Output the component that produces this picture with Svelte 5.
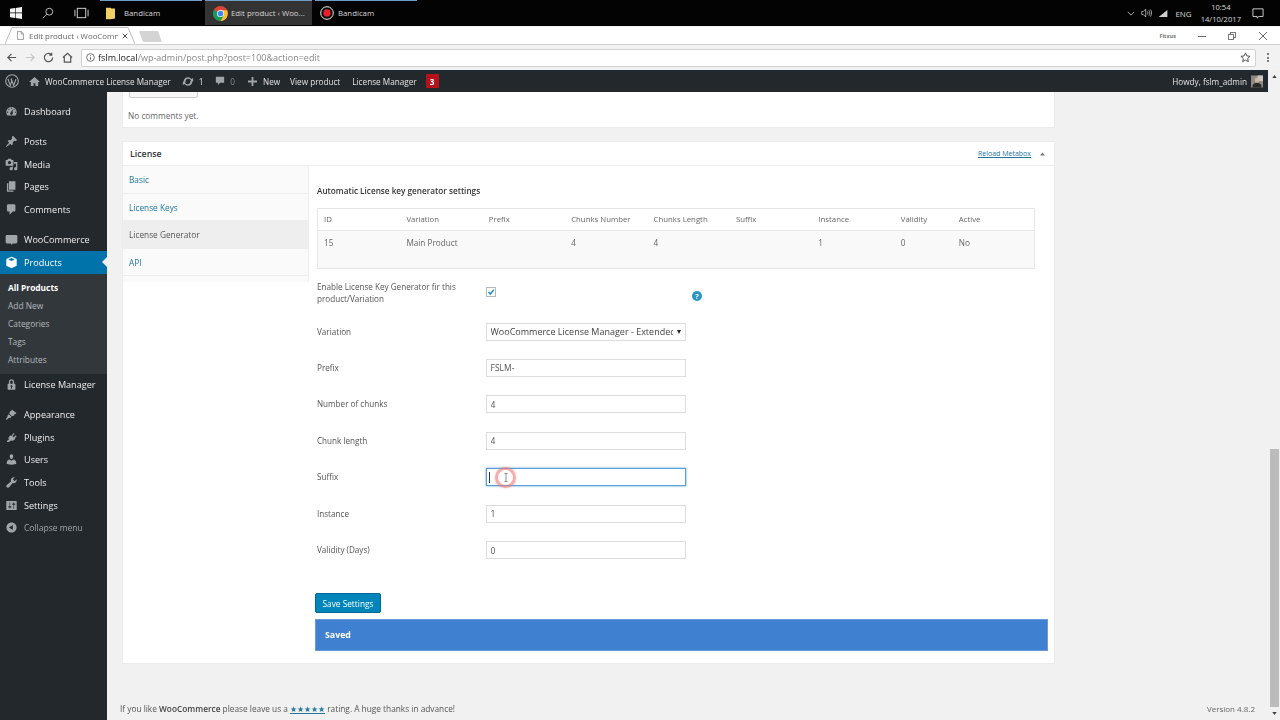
<script>
  const ic = {
    dash: "M3.76 16h12.48c1.1-1.37 1.76-3.11 1.76-5 0-4.42-3.58-8-8-8s-8 3.58-8 8c0 1.89.66 3.63 1.76 5zM10 4c.55 0 1 .45 1 1s-.45 1-1 1-1-.45-1-1 .45-1 1-1zM6 6c.55 0 1 .45 1 1s-.45 1-1 1-1-.45-1-1 .45-1 1-1zm8 0c.55 0 1 .45 1 1s-.45 1-1 1-1-.45-1-1 .45-1 1-1zm-5.37 5.55L12 7v6c0 1.1-.9 2-2 2s-2-.9-2-2c0-.57.24-1.08.63-1.45zM4 10c.55 0 1 .45 1 1s-.45 1-1 1-1-.45-1-1 .45-1 1-1zm12 0c.55 0 1 .45 1 1s-.45 1-1 1-1-.45-1-1 .45-1 1-1z",
    pin: "M10.44 3.02l1.82-1.82 6.36 6.35-1.83 1.82c-1.05-.68-2.48-.57-3.41.36l-.75.75c-.92.93-1.04 2.35-.35 3.41l-1.83 1.82-2.41-2.41-2.8 2.79c-.42.42-3.38 2.71-3.8 2.29s1.86-3.39 2.28-3.81l2.79-2.79L4.1 9.36l1.83-1.82c1.05.69 2.48.57 3.4-.36l.75-.75c.93-.92 1.05-2.35.36-3.41z",
    media: "M13 11V4c0-.55-.45-1-1-1h-1.67L9 1H5L3.67 3H2c-.55 0-1 .45-1 1v7c0 .55.45 1 1 1h10c.55 0 1-.45 1-1zM7 4.500c1.380 0 2.500 1.120 2.500 2.500S8.380 9.500 7 9.500 4.500 8.380 4.500 7 5.620 4.500 7 4.500zM14 6h5v10.500c0 1.380-1.120 2.500-2.500 2.500S14 17.880 14 16.500s1.120-2.500 2.500-2.500c.17 0 .34.02.5.05V9h-3V6zm-4 8.050V13h2v3.500c0 1.380-1.120 2.500-2.500 2.500S7 17.880 7 16.500 8.120 14 9.500 14c.17 0 .34.02.5.05z",
    pages: "M6 15V2h10v13H6zm-1 1h8v2H3V5h2v11z",
    comment: "M5 2h9c1.100 0 2 .9 2 2v7c0 1.100-.9 2-2 2h-2l-5 5v-5H5c-1.100 0-2-.9-2-2V4c0-1.100.9-2 2-2z",
    woo: "M3 3h14c1.100 0 2 .9 2 2v9c0 1.100-.9 2-2 2h-5l-1.500 2.500L9 16H3c-1.100 0-2-.9-2-2V5c0-1.100.9-2 2-2z",
    box: "M10 1l8 3.500v10.500l-8 4-8-4V4.500zM10 3.200L5 5.300l5 2.200 5-2.200z",
    lock: "M14 9h1c.55 0 1 .45 1 1v7c0 .55-.45 1-1 1H5c-.55 0-1-.45-1-1v-7c0-.55.45-1 1-1h1V6c0-2.210 1.790-4 4-4s4 1.790 4 4v3zm-2 0V6c0-1.100-.9-2-2-2s-2 .9-2 2v3h4zm-1 7l-.36-2.150c.51-.24.86-.75.86-1.350 0-.83-.67-1.500-1.500-1.500s-1.500.67-1.500 1.500c0 .6.35 1.110.86 1.350L9 16h2z",
    brush: "M11 2.500l6.500 5-1.500 2-1-.5-1 2.500-3.500 1-4-4 1.500-3.500 2.500-1-.3-1zM5.500 9.500l4.500 4-1.500 1.500c-1.500.5-2.500 0-3.500 1-.8.8-2 2-3 2s.2-2.500 1-3.300c1-1 1-2 1-3.200z",
    plug: "M13 3l1.500 1.500-3 3 2 2 3-3L18 8l-3 3 1 1-1.500 1.500c-2 2-4 2-5.500 1L6 17H3v-1.500l3-2.500c-1-1.500-.5-3.500 1-5L8.500 6.500l1.500 1z",
    user: "M10 9.250c-2.270 0-2.730-3.440-2.730-3.440C7 4.020 7.820 2 9.960 2c2.150 0 2.970 2.020 2.700 3.810 0 0-.39 3.440-2.660 3.440zm0 2.570L12.720 10c2.390 0 4.520 2.330 4.520 4.530v2.490s-3.650 1.130-7.240 1.130c-3.650 0-7.240-1.130-7.240-1.130v-2.490c0-2.250 1.940-4.480 4.150-4.480z",
    tools: "M16.680 9.770c-1.340 1.340-3.300 1.670-4.950.99l-5.410 6.520c-.99.99-2.590.99-3.580 0s-.99-2.590 0-3.570l6.520-5.420c-.68-1.650-.35-3.610.99-4.950 1.280-1.280 3.120-1.620 4.720-1.060l-2.890 2.890 2.820 2.820 2.860-2.870c.53 1.580.18 3.400-1.080 4.670z",
    settings: "M18 16V4c0-.55-.45-1-1-1H3c-.55 0-1 .45-1 1v12c0 .55.45 1 1 1h14c.55 0 1-.45 1-1zM8 11h1c.55 0 1 .45 1 1s-.45 1-1 1H8v1.500c0 .28-.22.5-.5.5s-.5-.22-.5-.5V13H6c-.55 0-1-.45-1-1s.45-1 1-1h1V5.500c0-.28.22-.5.5-.5s.5.22.5.5V11zm5-2h-1c-.55 0-1-.45-1-1s.45-1 1-1h1V5.500c0-.28.22-.5.5-.5s.5.22.5.5V7h1c.55 0 1 .45 1 1s-.45 1-1 1h-1v5.500c0 .28-.22.5-.5.5s-.5-.22-.5-.5V9z",
    collapse: "M10 2.160c4.330 0 7.840 3.510 7.840 7.840s-3.510 7.840-7.840 7.840S2.160 14.330 2.160 10 5.670 2.160 10 2.160zM12 14V6l-6 4z"
  };
  const groupA = [["Posts", ic.pin], ["Media", ic.media], ["Pages", ic.pages], ["Comments", ic.comment]];
  const sub = ["All Products", "Add New", "Categories", "Tags", "Attributes"];
  const groupB = [["Appearance", ic.brush], ["Plugins", ic.plug], ["Users", ic.user], ["Tools", ic.tools], ["Settings", ic.settings]];
  const cols = ["ID", "Variation", "Prefix", "Chunks Number", "Chunks Length", "Suffix", "Instance", "Validity", "Active"];
  const vals = ["15", "Main Product", "", "4", "4", "", "1", "0", "No"];
  const tabs = ["Basic", "License Keys", "License Generator", "API"];
  const fields = [["Prefix", "FSLM-"], ["Number of chunks", "4"], ["Chunk length", "4"], ["Suffix", ""], ["Instance", "1"], ["Validity (Days)", "0"]];
</script>

<div class="screen">
  <header class="taskbar">
    <div class="tb-left">
      <svg class="win" viewBox="0 0 12 12"><path d="M0 1.700 5 1v4.600H0zM5.600.9 12 0v5.600H5.600zM0 6.200h5v4.700l-5-.7zM5.600 6.200H12V12l-6.400-.9z" /></svg>
      <svg class="tb-ic search" viewBox="0 0 14 14"><circle cx="8.500" cy="5.500" r="4" /><path d="M5.500 8.500 1 13" /></svg>
      <svg class="tb-ic view" viewBox="0 0 16 12"><rect x="3.500" y="1" width="9" height="10" /><path d="M1 2.500v7M15 2.500v7" /></svg>
    </div>
    <div class="task t1">
      <svg class="folder" viewBox="0 0 10 13"><path d="M0 0h5l1 1h4v11l-5 1H0z" /></svg>
      <span>Bandicam</span>
    </div>
    <div class="task t2">
      <svg class="chrome" viewBox="0 0 16 16">
        <circle cx="8" cy="8" r="8" fill="#db4437" />
        <path d="M8 8 1.100 4A8 8 0 0 0 8 16l3.500-6z" fill="#0f9d58" />
        <path d="M8 4.500h7A8 8 0 0 1 8 16l3.500-6z" fill="#fbc02d" />
        <circle cx="8" cy="8" r="3.800" fill="#fff" /><circle cx="8" cy="8" r="3" fill="#4285f4" />
      </svg>
      <span>Edit product ‹ Woo...</span>
    </div>
    <div class="task t3">
      <svg class="rec" viewBox="0 0 14 14"><circle cx="7" cy="7" r="6.300" /><circle cx="7" cy="7" r="3.700" class="dot" /></svg>
      <span>Bandicam</span>
    </div>
    <div class="tray">
      <svg class="tr-ic" viewBox="0 0 10 6"><path d="M1 1l4 4 4-4" /></svg>
      <svg class="tr-vol" viewBox="0 0 14 12"><path d="M1 4h2l3-3v10L3 8H1zM8 4c1 1 1 3 0 4M10 2.500c1.700 2 1.700 5 0 7M12 1.500c2 2.600 2 6.400 0 9" /></svg>
      <svg class="tr-net" viewBox="0 0 10 8"><path d="M0 8 10 0v8z" /></svg>
      <span class="lang">ENG</span>
      <div class="clock"><span>10:54</span><span>14/10/2017</span></div>
      <svg class="tr-note" viewBox="0 0 14 13"><path d="M1 1h12v9H8l-2 2v-2H1z" /></svg>
    </div>
  </header>

  <div class="tabstrip">
    <div class="tab">
      <svg class="tab-shape" viewBox="0 0 130 17" preserveAspectRatio="none"><path d="M0 17 L7 .5 H123 L130 17" /></svg>
      <svg class="doc" viewBox="0 0 9 11"><path d="M.5.500h5l3 3v7h-8zM5.500.500v3h3" /></svg>
      <span class="tab-title">Edit product ‹ WooComn</span>
      <svg class="tab-x" viewBox="0 0 8 8"><path d="M1 1l6 6M7 1 1 7" /></svg>
    </div>
    <div class="newtab"></div>
    <div class="win-ctl">
      <span class="profile">Fitxus</span>
      <svg class="wc min" viewBox="0 0 10 10"><path d="M0 5h10" /></svg>
      <svg class="wc res" viewBox="0 0 10 10"><path d="M.5 3h6.500v6.500H.5zM3 3V.5h6.500v6.500H7" /></svg>
      <svg class="wc cls" viewBox="0 0 10 10"><path d="M0 0l10 10M10 0 0 10" /></svg>
    </div>
  </div>

  <div class="toolbar">
    <svg class="nav" viewBox="0 0 12 12"><path d="M11 6H2M6 2 2 6l4 4" /></svg>
    <svg class="nav off" viewBox="0 0 12 12"><path d="M1 6h9M6 2l4 4-4 4" /></svg>
    <svg class="nav" viewBox="0 0 12 12"><path d="M10.500 6A4.500 4.500 0 1 1 9 2.700M9.500 .8v2.700H6.800" /></svg>
    <svg class="nav" viewBox="0 0 12 12"><path d="M1 6l5-4.500L11 6M2.500 5v6h7V5" /></svg>
    <div class="omni">
      <svg class="info" viewBox="0 0 10 10"><circle cx="5" cy="5" r="4.300" /><path d="M5 4.500V7.500M5 2.500v1" /></svg>
      <span class="host">fslm.local</span><span class="path">/wp-admin/post.php?post=100&amp;action=edit</span>
      <svg class="star" viewBox="0 0 12 12"><path d="M6 1l1.500 3.300 3.500.4-2.600 2.400.7 3.500L6 8.800l-3.100 1.800.7-3.500L1 4.700l3.500-.4z" /></svg>
    </div>
    <div class="dots"><i></i><i></i><i></i></div>
  </div>

  <div class="page">
    <div class="main">
      <div class="adminbar">
        <svg class="wp" viewBox="0 0 16 16"><circle cx="8" cy="8" r="7.200" /><path d="M3.300 5.500 6 13l1.800-5-1-2.500M7 5.500 10 13l2.500-7" /></svg>
        <svg class="ab-ic home" viewBox="0 0 12 12"><path d="M6 1 0 6.500h2V11h3V8h2v3h3V6.500h2z" /></svg>
        <span class="ab-site">WooCommerce License Manager</span>
        <svg class="ab-ic upd" viewBox="0 0 14 12"><path d="M2 6a5 5 0 0 1 9-3l2-1v4H9l1.500-1.200A3.400 3.400 0 0 0 4 6zM12 6a5 5 0 0 1-9 3l-2 1V6h4L3.500 7.200A3.400 3.400 0 0 0 10 6z" /></svg>
        <span class="ab-num">1</span>
        <svg class="ab-ic cmt" viewBox="0 0 12 12"><path d="M1 1h10v7H6l-2.500 3V8H1z" /></svg>
        <span class="ab-num dim">0</span>
        <svg class="ab-ic plus" viewBox="0 0 10 10"><path d="M4 0h2v4h4v2H6v4H4V6H0V4h4z" /></svg>
        <span class="ab-new">New</span>
        <span class="ab-view">View product</span>
        <span class="ab-lm">License Manager</span>
        <span class="ab-badge">3</span>
        <span class="howdy">Howdy, fslm_admin</span>
        <svg class="avatar" viewBox="0 0 13 13"><rect width="13" height="13" fill="#8d8a84" /><rect x="7" width="6" height="6" fill="#c9c6c0" /><circle cx="6.500" cy="5" r="2.500" fill="#d2b7a0" /><path d="M1.500 13c0-4 2-5 5-5s5 1 5 5z" fill="#2b2725" /></svg>
      </div>

      <div class="body">
        <nav class="side">
          <a class="item first"><svg viewBox="0 0 20 20"><path d={ic.dash} /></svg><span>Dashboard</span></a>
          <div class="group">
            {#each groupA as [label, d]}
              <a class="item"><svg viewBox="0 0 20 20"><path d={d} /></svg><span>{label}</span></a>
            {/each}
          </div>
          <div class="group">
            <a class="item"><svg viewBox="0 0 20 20"><path d={ic.woo} /></svg><span>WooCommerce</span></a>
            <a class="item cur"><svg viewBox="0 0 20 20"><path d={ic.box} fill-rule="evenodd" /></svg><span>Products</span><b class="notch"></b></a>
            <div class="submenu">
              {#each sub as s, i}<a class:on={i === 0}>{s}</a>{/each}
            </div>
            <a class="item"><svg viewBox="0 0 20 20"><path d={ic.lock} /></svg><span>License Manager</span></a>
          </div>
          <div class="group last">
            {#each groupB as [label, d]}
              <a class="item"><svg viewBox="0 0 20 20"><path d={d} fill-rule="evenodd" /></svg><span>{label}</span></a>
            {/each}
            <a class="item collapse"><svg viewBox="0 0 20 20"><path d={ic.collapse} fill-rule="evenodd" /></svg><span>Collapse menu</span></a>
          </div>
        </nav>

        <main class="content">
          <section class="box commentbox">
            <button class="addc">Add comment</button>
            <p>No comments yet.</p>
          </section>

          <section class="box license">
            <div class="box-head">
              <h2>License</h2>
              <a class="reload">Reload Metabox</a>
              <svg class="collapse-up" viewBox="0 0 8 5"><path d="M4 0l4 5H0z" /></svg>
            </div>
            <div class="box-body">
              <ul class="tabs">
                {#each tabs as t, i}<li class:active={i === 2}>{t}</li>{/each}
              </ul>
              <div class="panel">
                <h3>Automatic License key generator settings</h3>
                <div class="tbl">
                  <div class="tr th">{#each cols as c}<span>{c}</span>{/each}</div>
                  <div class="tr td">{#each vals as v}<span>{v}</span>{/each}</div>
                </div>
                <div class="frow enable">
                  <label>Enable License Key Generator fir this product/Variation</label>
                  <span class="check"><svg viewBox="0 0 10 10"><path d="M2 5l2.200 2.500L8.500 2" /></svg></span>
                  <span class="help">?</span>
                </div>
                <div class="frow var">
                  <label>Variation</label>
                  <div class="select"><span>WooCommerce License Manager - Extended</span><i></i></div>
                </div>
                {#each fields as [label, v]}
                  <div class="frow fld">
                    <label>{label}</label>
                    <div class="ctl" class:focus={label === "Suffix"}>
                      <input value={v} />
                      {#if label === "Suffix"}
                        <b class="caret"></b>
                        <b class="ring"></b>
                        <svg class="ibeam" viewBox="0 0 5 11"><path d="M.5.500h4M2.500.500v10M.5 10.500h4" /></svg>
                      {/if}
                    </div>
                  </div>
                {/each}
                <button class="save">Save Settings</button>
                <div class="saved">Saved</div>
              </div>
            </div>
          </section>

          <footer class="foot">
            <span>If you like <strong>WooCommerce</strong> please leave us a <a>★★★★★</a> rating. A huge thanks in advance!</span>
            <span class="ver">Version 4.8.2</span>
          </footer>
        </main>
      </div>
    </div>
    <div class="scroll">
      <svg class="arr" viewBox="0 0 6 4"><path d="M3 0l3 4H0z" /></svg>
      <div class="thumb"></div>
      <svg class="arr" viewBox="0 0 6 4"><path d="M3 4 0 0h6z" /></svg>
    </div>
  </div>
</div>

<style>
  :global(body) { margin: 0; background: #f1f1f1; }
  .screen {
    width: 1280px; height: 720px; overflow: hidden; display: flex; flex-direction: column;
    font-family: "Open Sans", "Liberation Sans", sans-serif; font-size: 8.5px; color: #444;
    filter: blur(.3px);
  }
  svg { display: block; flex: none; }

  /* Windows taskbar */
  .taskbar { height: 26px; background: #030303; display: flex; color: #d8d8d8; font-size: 7.8px; flex: none; white-space: nowrap; }
  .tb-left { width: 100px; display: flex; align-items: center; }
  .win { width: 12px; height: 12px; margin-left: 10px; fill: #f4f4f4; }
  .tb-ic { fill: none; stroke: #d8d8d8; stroke-width: 1; }
  .search { width: 12px; height: 12px; margin-left: 20px; }
  .view { width: 15px; height: 12px; margin-left: 20px; }
  .task { display: flex; align-items: center; border-top: 1px solid #6d9cc4; height: 25px; }
  .t1 { width: 102px; padding-left: 6px; box-sizing: border-box; gap: 9px; }
  .t2 { width: 107px; margin-left: 3px; padding-left: 8px; box-sizing: border-box; gap: 3px; background: #333; }
  .t3 { width: 102px; margin-left: 3px; padding-left: 5px; box-sizing: border-box; gap: 4px; }
  .folder { width: 9px; height: 13px; fill: #f2cf63; }
  .chrome { width: 15px; height: 15px; }
  .rec { width: 14px; height: 14px; fill: #050505; stroke: #f0f0f0; stroke-width: 1; }
  .rec .dot { fill: #e8202c; stroke: none; }
  .tray { margin-left: auto; display: flex; align-items: center; }
  .tr-ic { width: 8px; height: 5px; fill: none; stroke: #d8d8d8; margin-right: 6px; }
  .tr-vol { width: 11px; height: 10px; fill: none; stroke: #d8d8d8; stroke-width: .9; margin-right: 6px; }
  .tr-net { width: 10px; height: 7px; fill: #cfcfcf; margin-right: 7px; }
  .lang { margin-right: 9px; font-size: 8px; }
  .clock { display: flex; flex-direction: column; align-items: center; line-height: 12px; font-size: 7.600px; margin-right: 11px; }
  .tr-note { width: 12px; height: 11px; fill: none; stroke: #e8e8e8; margin-right: 16px; }

  /* Chrome */
  .tabstrip { height: 17px; margin-top: 1px; background: #fff; display: flex; align-items: flex-end; flex: none; }
  .tab {
    width: 130px; height: 17px; margin-left: 5px; padding: 0 7px 0 12px; box-sizing: border-box;
    display: flex; align-items: center; position: relative;
  }
  .tab-shape { position: absolute; left: 0; top: 0; width: 130px; height: 17px; fill: #fff; stroke: #bdbdbd; stroke-width: 1; }
  .doc { width: 7px; height: 9px; fill: none; stroke: #666; stroke-width: .8; position: relative; }
  .tab-title { margin-left: 5px; font-size: 7.900px; color: #666; white-space: nowrap; overflow: hidden; width: 89px; position: relative; }
  .tab-x { width: 6px; height: 6px; margin-left: auto; stroke: #444; stroke-width: 1.300; position: relative; }
  .newtab { width: 19px; height: 11px; margin: 0 0 2px 6px; background: #d4d4d4; transform: skewX(20deg); border-radius: 1px; }
  .win-ctl { margin-left: auto; display: flex; align-items: center; height: 17px; }
  .profile { font-size: 5.500px; color: #777; font-weight: 700; margin-right: 22px; }
  .wc { width: 8px; height: 8px; fill: none; stroke: #444; stroke-width: 1; }
  .min { margin-right: 22px; shape-rendering: crispEdges; }
  .res { margin-right: 23px; }
  .cls { margin-right: 13px; }
  .toolbar { height: 26px; background: #f2f2f2; border-top: 1px solid #d0d0d0; box-sizing: border-box; display: flex; align-items: center; flex: none; }
  .nav { width: 11px; height: 11px; margin-left: 7.700px; fill: none; stroke: #555; stroke-width: 1.300; }
  .nav:first-child { margin-left: 6px; }
  .nav.off { stroke: #c6c6c6; }
  .omni {
    width: 1175px; height: 18px; margin-left: 8px; background: #fff; border: 1px solid #d2d2d2; border-radius: 2px;
    box-sizing: border-box; display: flex; align-items: center; font-size: 9px; padding-left: 4px;
  }
  .info { width: 9px; height: 9px; fill: none; stroke: #555; stroke-width: .9; margin-right: 3px; }
  .host { color: #222; }
  .path { color: #888; }
  .star { width: 11px; height: 11px; margin-left: auto; margin-right: 4px; fill: none; stroke: #444; stroke-width: 1; }
  .dots { margin-left: 11px; display: flex; flex-direction: column; gap: 1.500px; }
  .dots i { width: 2px; height: 2px; background: #555; border-radius: 1px; }

  /* Page */
  .page { flex: 1; display: flex; min-height: 0; background: #f1f1f1; }
  .main { width: 1268px; display: flex; flex-direction: column; }
  .adminbar {
    height: 22px; flex: none; background: #23282d; color: #e4e4e4; display: flex; align-items: center;
    font-size: 8.200px; white-space: nowrap;
  }
  .wp { width: 14px; height: 14px; margin-left: 5px; fill: none; stroke: #a0a5aa; stroke-width: 1.300; }
  .ab-ic { fill: #a0a5aa; }
  .home { width: 11px; height: 11px; margin-left: 10px; }
  .ab-site { margin-left: 5px; }
  .upd { width: 12px; height: 11px; margin-left: 11px; }
  .ab-num { margin-left: 5px; }
  .ab-num.dim { color: #888; }
  .cmt { width: 10px; height: 10px; margin-left: 12px; }
  .plus { width: 9px; height: 9px; margin-left: 13px; }
  .ab-new { margin-left: 6px; }
  .ab-view { margin-left: 10px; }
  .ab-lm { margin-left: 12px; }
  .ab-badge { margin-left: 9px; width: 13px; height: 14px; background: #b5121b; color: #fff; font-weight: 700; display: flex; align-items: center; justify-content: center; }
  .howdy { margin-left: auto; }
  .avatar { width: 12px; height: 13px; margin: 0 5px 0 4px; }

  .body { flex: 1; display: flex; min-height: 0; }
  .side { width: 107px; flex: none; background: #23282d; padding-top: 8px; box-sizing: border-box; font-size: 9.100px; }
  .item { height: 22.670px; display: flex; align-items: center; color: #eee; position: relative; }
  .item svg { width: 13px; height: 13px; margin: 0 6px 0 5px; fill: #a0a5aa; }
  .item span { white-space: nowrap; }
  .group { margin-top: 7.500px; }
  .group.last { margin-top: 7px; }
  .cur { background: #0073aa; color: #fff; }
  .cur svg { fill: #fff; }
  .notch { position: absolute; right: 0; top: 6px; border: 5px solid transparent; border-right-color: #f1f1f1; border-left: 0; }
  .submenu { background: #32373c; padding: 5px 0; }
  .submenu a { display: block; height: 18px; line-height: 18px; padding-left: 8px; color: #b4b9be; font-size: 8.400px; }
  .submenu a.on { color: #fff; font-weight: 700; }
  .collapse { color: #a0a5aa; font-size: 8.500px; }

  .content { flex: 1; padding: 0 13px 0 15px; min-width: 0; }
  .box { width: 933px; background: #fff; border: 1px solid #ebebeb; box-sizing: border-box; }
  .commentbox { height: 36px; border-top: 0; padding-left: 5px; position: relative; overflow: hidden; }
  .addc {
    position: absolute; left: 6px; top: -14px; width: 69px; height: 20px; padding: 0; background: #f7f7f7; border: 1px solid #ccc;
    border-radius: 2px; font: inherit; color: #555;
  }
  .commentbox p { margin: 18px 0 0; font-size: 8.300px; color: #666; line-height: 12px; }
  .license { margin-top: 13px; height: 523px; }
  .box-head { height: 23px; border-bottom: 1px solid #eee; display: flex; align-items: center; padding: 0 9px 0 7px; }
  h2 { margin: 0; font-size: 8.800px; font-weight: 600; color: #32373c; }
  .reload { margin-left: auto; font-size: 7px; color: #21759b; text-decoration: underline; }
  .collapse-up { width: 5px; height: 4px; margin-left: 9px; fill: #72777c; }
  .box-body { display: flex; }
  .tabs { list-style: none; margin: 0; padding: 0 0 6px; width: 186px; flex: none; background: #fafafa; border-right: 1px solid #eee; box-sizing: border-box; height: 116px; }
  .tabs li { height: 27.500px; line-height: 27px; padding-left: 6px; box-sizing: border-box; border-bottom: 1px solid #eee; color: #21759b; font-size: 8.300px; }
  .tabs li.active { background: #eee; color: #555; }
  .panel { flex: 1; padding: 0 7px 0 6px; min-width: 0; }
  h3 { margin: 19px 0 0 2px; height: 23px; line-height: 12px; font-size: 8.200px; font-weight: 600; color: #333; }
  .tbl { margin-left: 2px; width: 718px; border: 1px solid #e5e5e5; box-sizing: border-box; color: #666; }
  .tr { display: grid; grid-template-columns: repeat(7, 82.400px) 58px 1fr; padding-left: 6px; }
  .th { height: 22px; line-height: 21px; border-bottom: 1px solid #e5e5e5; box-sizing: border-box; font-size: 7.800px; }
  .td { height: 37px; line-height: 24px; background: #f9f9f9; font-size: 8.200px; }
  .frow { display: flex; align-items: center; margin-left: 2px; font-size: 8.150px; color: #555; }
  .frow label { width: 168.500px; flex: none; line-height: 12px; }
  .enable { margin-top: 9px; height: 30px; position: relative; }
  .enable label { width: 150px; margin-right: 18.500px; }
  .check { width: 10px; height: 10px; border: 1px solid #b4b9be; box-sizing: border-box; background: #fff; margin-top: -2px; }
  .check svg { width: 8px; height: 8px; fill: none; stroke: #1e8cbe; stroke-width: 1.800; }
  .help {
    position: absolute; left: 375px; top: 13px; width: 10px; height: 10px; border-radius: 50%; background: #2a95c5; color: #fff;
    font-size: 7.500px; font-weight: 700; line-height: 10px; text-align: center;
  }
  .var { margin-top: 15px; height: 18px; }
  .select {
    width: 200px; height: 18px; border: 1px solid #ddd; box-sizing: border-box; position: relative; padding-left: 4px;
    line-height: 16px; background: #fff; color: #444; overflow: hidden; font-size: 9px;
  }
  .select span { display: block; width: 182px; overflow: hidden; white-space: nowrap; }
  .select i { position: absolute; right: 4px; top: 6px; border: 2.500px solid transparent; border-top: 4px solid #222; border-bottom: 0; }
  .fld { height: 18px; margin-top: 18.500px; }
  .var + .fld { margin-top: 17.500px; }
  .ctl { width: 200px; height: 18px; position: relative; }
  input {
    display: block; width: 100%; height: 100%; box-sizing: border-box; border: 1px solid #ddd; padding: 0 4px; outline: 0;
    font: inherit; font-size: 8.500px; color: #555; background: #fff;
  }
  .focus input { border-color: #5b9dd9; box-shadow: 0 0 2px rgba(30,140,190,.8); }
  .caret { position: absolute; left: 3px; top: 4px; width: 1px; height: 11px; background: #333; }
  .ring {
    position: absolute; left: 9px; top: -1px; width: 15px; height: 15px; border: 3px solid rgba(235,120,120,.6);
    border-radius: 50%; box-sizing: content-box; box-shadow: 0 0 2px rgba(235,120,120,.5);
  }
  .ibeam { position: absolute; left: 18px; top: 4px; width: 4px; height: 11px; fill: none; stroke: #777; stroke-width: 1; }
  .save {
    display: block; width: 66px; height: 20px; margin-top: 34px; background: #0085ba; border: 1px solid #006799; border-radius: 2px;
    color: #fff; font: inherit; font-size: 8.300px; padding: 0;
  }
  .saved {
    margin-top: 6px; width: 733px; height: 32px; line-height: 31px; background: #4080d0; border: 1px solid #6a9bd8; box-sizing: border-box; padding-left: 9px;
    color: #fff; font-weight: 700; font-size: 8.800px;
  }
  .foot { margin-top: 39px; margin-left: -2px; width: 1135px; display: flex; justify-content: space-between; font-size: 8.300px; color: #555; line-height: 12px; }
  .foot strong { font-weight: 600; color: #444; }
  .foot a { color: #21759b; text-decoration: underline; }
  .ver { color: #666; font-size: 8px; }

  .scroll { flex: 1; background: #f1f1f1; display: flex; flex-direction: column; align-items: center; position: relative; }
  .arr { width: 5px; height: 3px; fill: #444; margin: 5px 0; }
  .thumb { width: 9px; height: 258px; margin-top: auto; background: #bcbcbc; }
</style>
